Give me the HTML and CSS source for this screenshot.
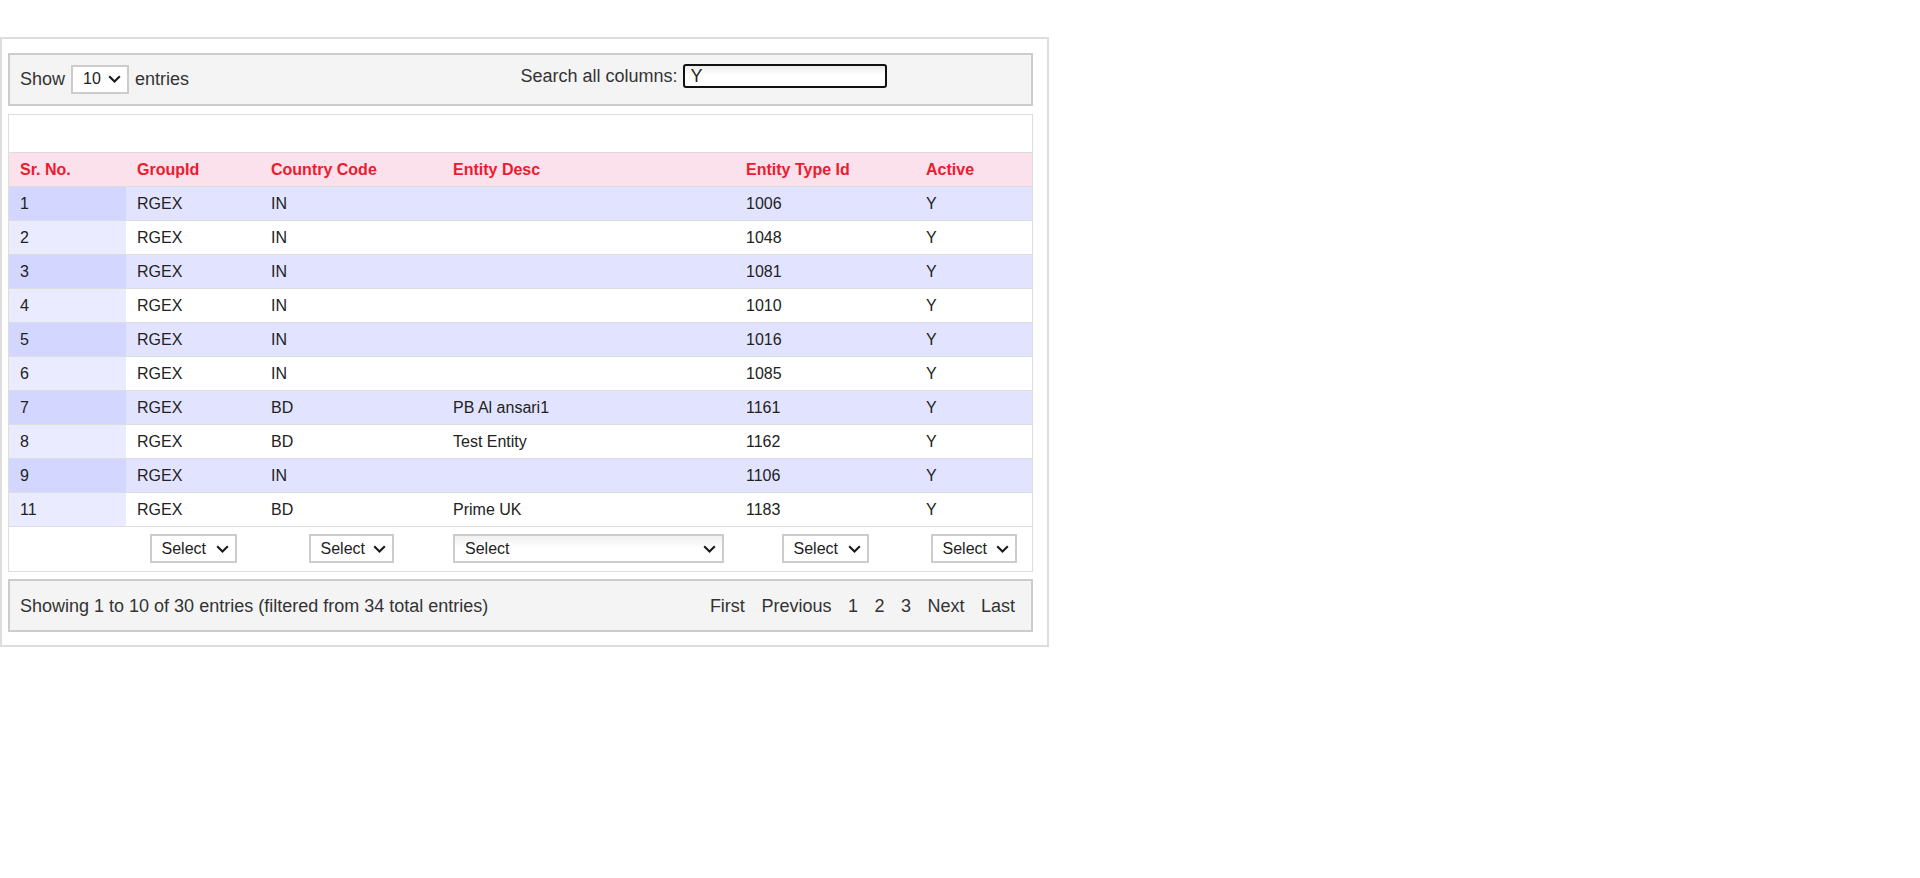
FILE: index.html
```html
<!DOCTYPE html>
<html lang="en">
<head>
<meta charset="utf-8">
<title>Entities</title>
<link rel="stylesheet" href="styles.css">
</head>
<body>
<div class="wrap">
  <div class="toolbar">
    <div class="length">
      <span>Show</span>
      <div class="sel sel-len"><span>10</span><svg class="chev" width="13" height="8" viewBox="0 0 13 8"><path d="M1.2 1.2L6.5 6.5L11.8 1.2" fill="none" stroke="#1a1a1a" stroke-width="2.1"/></svg></div>
      <span>entries</span>
    </div>
    <div class="filter">
      <label for="q">Search all columns:</label>
      <input id="q" class="search" type="text" value="Y">
    </div>
  </div>

  <div class="tablebox">
    <div class="caption"></div>
    <table class="grid">
      <colgroup>
        <col class="c1"><col class="c2"><col class="c3"><col class="c4"><col class="c5"><col class="c6">
      </colgroup>
      <thead>
        <tr><th>Sr. No.</th><th>GroupId</th><th>Country Code</th><th>Entity Desc</th><th>Entity Type Id</th><th>Active</th></tr>
      </thead>
      <tbody>
        <tr class="odd"><td class="sorted">1</td><td>RGEX</td><td>IN</td><td></td><td>1006</td><td>Y</td></tr>
        <tr class="even"><td class="sorted">2</td><td>RGEX</td><td>IN</td><td></td><td>1048</td><td>Y</td></tr>
        <tr class="odd"><td class="sorted">3</td><td>RGEX</td><td>IN</td><td></td><td>1081</td><td>Y</td></tr>
        <tr class="even"><td class="sorted">4</td><td>RGEX</td><td>IN</td><td></td><td>1010</td><td>Y</td></tr>
        <tr class="odd"><td class="sorted">5</td><td>RGEX</td><td>IN</td><td></td><td>1016</td><td>Y</td></tr>
        <tr class="even"><td class="sorted">6</td><td>RGEX</td><td>IN</td><td></td><td>1085</td><td>Y</td></tr>
        <tr class="odd"><td class="sorted">7</td><td>RGEX</td><td>BD</td><td>PB Al ansari1</td><td>1161</td><td>Y</td></tr>
        <tr class="even"><td class="sorted">8</td><td>RGEX</td><td>BD</td><td>Test Entity</td><td>1162</td><td>Y</td></tr>
        <tr class="odd"><td class="sorted">9</td><td>RGEX</td><td>IN</td><td></td><td>1106</td><td>Y</td></tr>
        <tr class="even"><td class="sorted">11</td><td>RGEX</td><td>BD</td><td>Prime UK</td><td>1183</td><td>Y</td></tr>
      </tbody>
      <tfoot>
        <tr class="filters">
          <td></td>
          <td><div class="sel sel-sm"><span>Select</span><svg class="chev" width="13" height="8" viewBox="0 0 13 8"><path d="M1.2 1.2L6.5 6.5L11.8 1.2" fill="none" stroke="#1a1a1a" stroke-width="2.1"/></svg></div></td>
          <td><div class="sel sel-sm2"><span>Select</span><svg class="chev" width="13" height="8" viewBox="0 0 13 8"><path d="M1.2 1.2L6.5 6.5L11.8 1.2" fill="none" stroke="#1a1a1a" stroke-width="2.1"/></svg></div></td>
          <td><div class="sel sel-wide"><span>Select</span><svg class="chev" width="13" height="8" viewBox="0 0 13 8"><path d="M1.2 1.2L6.5 6.5L11.8 1.2" fill="none" stroke="#1a1a1a" stroke-width="2.1"/></svg></div></td>
          <td><div class="sel sel-sm"><span>Select</span><svg class="chev" width="13" height="8" viewBox="0 0 13 8"><path d="M1.2 1.2L6.5 6.5L11.8 1.2" fill="none" stroke="#1a1a1a" stroke-width="2.1"/></svg></div></td>
          <td><div class="sel sel-sm3"><span>Select</span><svg class="chev" width="13" height="8" viewBox="0 0 13 8"><path d="M1.2 1.2L6.5 6.5L11.8 1.2" fill="none" stroke="#1a1a1a" stroke-width="2.1"/></svg></div></td>
        </tr>
      </tfoot>
    </table>
  </div>

  <div class="footer">
    <div class="info">Showing 1 to 10 of 30 entries (filtered from 34 total entries)</div>
    <div class="paginate">
      <a class="pbtn">First</a>
      <a class="pbtn">Previous</a>
      <a class="pbtn">1</a>
      <a class="pbtn">2</a>
      <a class="pbtn">3</a>
      <a class="pbtn">Next</a>
      <a class="pbtn">Last</a>
    </div>
  </div>
</div>
</body>
</html>
```
FILE: styles.css
```css
html, body {
  margin: 0;
  padding: 0;
  background: #ffffff;
}

body {
  font-family: "Liberation Sans", Arial, sans-serif;
  font-size: 18px;
  color: #333333;
}

.wrap {
  box-sizing: border-box;
  width: 1049px;
  margin-top: 37px;
  border: 2px solid #dddddd;
  padding: 14px 14px 13px 6px;
}

/* top toolbar */
.toolbar {
  box-sizing: border-box;
  height: 53px;
  border: 2px solid #cccccc;
  background: #f4f4f4;
  padding: 9px 10px 0 10px;
  display: grid;
  grid-template-columns: 1fr 1fr;
  align-items: start;
  margin-bottom: 8px;
}

.length {
  display: flex;
  align-items: center;
  height: 30px;
  gap: 6px;
}

.filter {
  display: flex;
  align-items: center;
  height: 24px;
  gap: 5px;
}

.search {
  box-sizing: border-box;
  width: 204px;
  height: 24px;
  border: 2px solid #111111;
  border-radius: 3px;
  padding: 0 0 0 6px;
  margin: 0;
  font-family: "Liberation Sans", Arial, sans-serif;
  font-size: 18px;
  color: #222222;
  background: linear-gradient(#ececec, #ffffff 45%);
  outline: none;
}

/* fake selects */
.sel {
  box-sizing: border-box;
  height: 29px;
  border: 2px solid #cccccc;
  background: #ffffff;
  display: flex;
  align-items: center;
  justify-content: space-between;
  padding: 0 6px 0 10px;
  font-size: 16px;
  color: #222222;
}

.sel-len {
  width: 58px;
}

.sel-sm {
  width: 87px;
  margin: 0 auto;
}

.sel-sm2 {
  width: 85px;
  margin: 0 auto;
}

.sel-sm3 {
  width: 86px;
  margin: 0 auto;
}

.sel-wide {
  width: 271px;
  margin: 0 auto;
  background: linear-gradient(#f1f1f1, #ffffff 50%);
}

.chev {
  display: block;
  flex: none;
}

/* table */
.tablebox {
  box-sizing: border-box;
  border: 1px solid #dddddd;
  background: #ffffff;
  margin-bottom: 7px;
}

.caption {
  height: 37px;
}

.grid {
  width: 100%;
  table-layout: fixed;
  border-collapse: separate;
  border-spacing: 0;
  font-size: 16px;
  color: #222222;
}

.c1 { width: 117px; }
.c2 { width: 134px; }
.c3 { width: 182px; }
.c4 { width: 293px; }
.c5 { width: 180px; }
.c6 { width: 117px; }

.grid th,
.grid td {
  border-top: 1px solid #dddddd;
  padding: 7px 9px 7px 11px;
  line-height: 19px;
  text-align: left;
  white-space: nowrap;
}

.grid th {
  background: #fbe1ec;
  color: #ec1b2e;
  font-weight: bold;
}

.grid tr.odd td { background: #e2e4ff; }
.grid tr.odd td.sorted { background: #d3d6ff; }
.grid tr.even td { background: #ffffff; }
.grid tr.even td.sorted { background: #eaebff; }

.grid tr.filters td {
  padding: 7px 10px 8px 10px;
  background: #ffffff;
}

/* footer */
.footer {
  box-sizing: border-box;
  height: 53px;
  border: 2px solid #cccccc;
  background: #f4f4f4;
  padding: 1px 16px 0 10px;
  display: flex;
  align-items: center;
  justify-content: space-between;
}

.paginate {
  display: flex;
  align-items: center;
  gap: 16.5px;
}

.pbtn {
  color: #333333;
  cursor: pointer;
}
```
